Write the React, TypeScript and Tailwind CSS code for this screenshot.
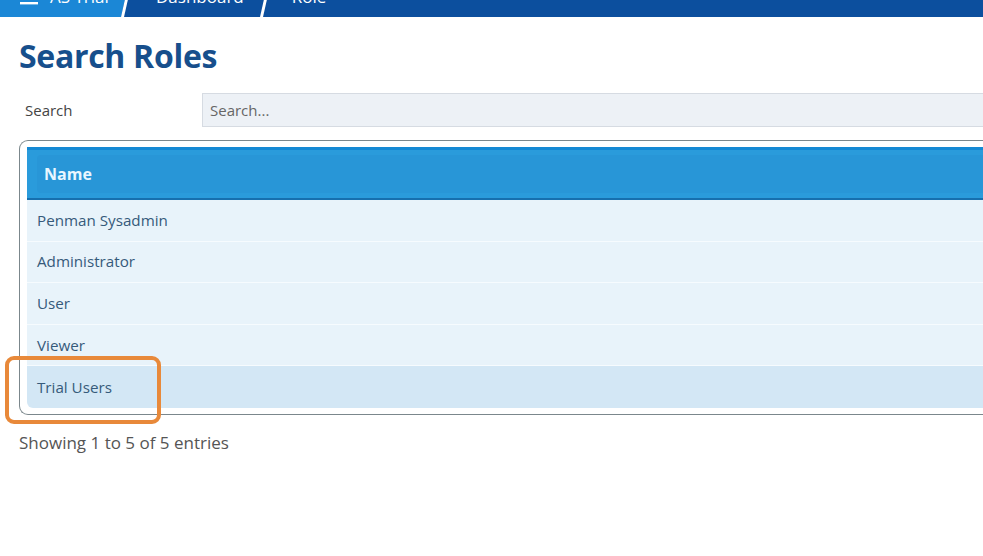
import { useState } from "react";

const roles = [
  "Penman Sysadmin",
  "Administrator",
  "User",
  "Viewer",
  "Trial Users",
];

function Slash({ fillLeft }: { fillLeft?: string }) {
  return (
    <svg width="14" height="40" viewBox="0 0 14 40" className="shrink-0">
      {fillLeft && <polygon points="0,0 11,0 2,40 0,40" fill={fillLeft} />}
      <polygon points="11,0 14,0 5,40 2,40" fill="white" />
    </svg>
  );
}

function Breadcrumb() {
  return (
    <nav className="-mt-[23px] flex h-10 items-center bg-[#0c4f9e] text-[17px] text-white">
      <div className="flex h-full w-[119px] items-center gap-3 bg-[#1b87d6] pl-[20px]">
        <svg width="18" height="16" viewBox="0 0 18 16" className="mt-[2px]">
          <rect x="0" y="2" width="18" height="2.4" fill="white" />
          <rect x="0" y="7" width="18" height="2.4" fill="white" />
          <rect x="0" y="12" width="18" height="2.4" fill="white" />
        </svg>
        <span>AS Trial</span>
      </div>
      <Slash fillLeft="#1b87d6" />
      <span className="pr-[14px] pl-[23px]">Dashboard</span>
      <Slash />
      <span className="pl-[20px]">Role</span>
    </nav>
  );
}

export default function App() {
  const [search, setSearch] = useState("");
  const filtered = roles.filter((r) =>
    r.toLowerCase().includes(search.toLowerCase()),
  );

  return (
    <div className="relative h-[556px] w-[983px] overflow-hidden bg-white font-['Open_Sans',sans-serif]">
      <Breadcrumb />

      <h1 className="mt-[19px] pl-[19px] text-[32px] leading-[40px] font-bold tracking-[-0.3px] text-[#174f8c]">
        Search Roles
      </h1>

      <div className="mt-[17px] flex items-center">
        <label className="w-[202px] pl-[25px] text-[15px] text-[#444]">Search</label>
        <input
          value={search}
          onChange={(e) => setSearch(e.target.value)}
          placeholder="Search..."
          className="h-[34px] flex-1 border border-r-0 border-[#d6dbe2] bg-[#edf1f6] px-[7px] text-[15px] text-[#444] placeholder:text-[#666] outline-none"
        />
      </div>

      <div className="mt-[13px] ml-[19px] rounded-l-[9px] border border-r-0 border-[#7b878c] py-[6px] pl-[7px]">
        <div className="border-t-[3px] border-b-[2px] border-t-[#1489d4] border-b-[#166fae] bg-[#2a9bdb] py-[5px] pl-[10px]">
          <div className="flex h-[38px] items-center rounded-l-[4px] bg-[#2896d7] px-[7px] text-[16px] font-bold text-[#e9f7ff]">
            Name
          </div>
        </div>
        {filtered.map((role, i) => {
          const last = i === filtered.length - 1;
          return (
            <div
              key={role}
              className={`flex h-[41.6px] items-center border-b border-[#f6fbfe] pl-[10px] text-[15.2px] text-[#365a7a] ${
                last ? "rounded-bl-[6px] border-b-0 bg-[#d3e7f5]" : "bg-[#e8f3fa]"
              }`}
            >
              {role}
            </div>
          );
        })}
      </div>

      <p className="mt-[15px] pl-[19px] text-[17px] text-[#555]">
        Showing 1 to 5 of 5 entries
      </p>

      <div className="absolute left-[5px] top-[356px] h-[68px] w-[156px] rounded-[9px] border-[4px] border-[#e8893a]" />
    </div>
  );
}
